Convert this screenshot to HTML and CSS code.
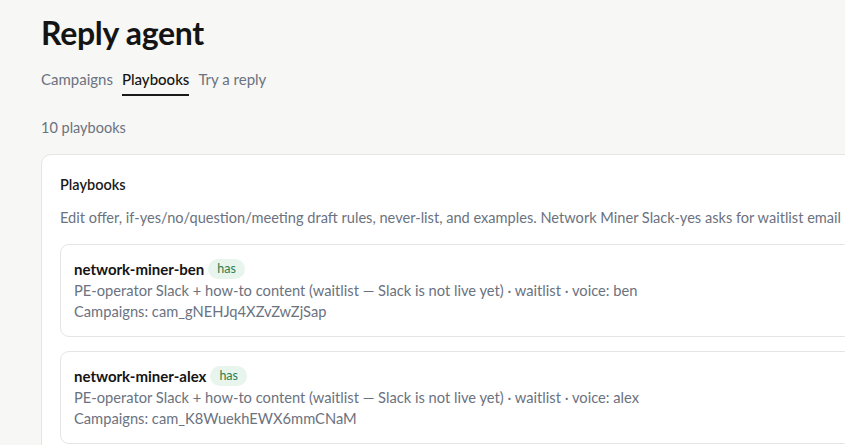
FILE: index.html
```html
<!DOCTYPE html>
<html lang="en">
<head>
<meta charset="utf-8">
<title>Reply agent</title>
<link rel="stylesheet" href="styles.css">
</head>
<body>
<main class="page">
  <h1 class="title">Reply agent</h1>
  <nav class="tabs">
    <a class="tab">Campaigns</a>
    <a class="tab active">Playbooks</a>
    <a class="tab">Try a reply</a>
  </nav>
  <p class="count">10 playbooks</p>
  <section class="card">
    <h2 class="card-title">Playbooks</h2>
    <p class="card-desc">Edit offer, if-yes/no/question/meeting draft rules, never-list, and examples. Network Miner Slack-yes asks for waitlist email — no call booking.</p>
    <div class="list">
      <article class="item">
        <div class="item-head"><span class="item-name">network-miner-ben</span><span class="badge">has</span></div>
        <div class="item-line">PE-operator Slack + how-to content (waitlist — Slack is not live yet) · waitlist · voice: ben</div>
        <div class="item-line">Campaigns: cam_gNEHJq4XZvZwZjSap</div>
      </article>
      <article class="item">
        <div class="item-head"><span class="item-name">network-miner-alex</span><span class="badge">has</span></div>
        <div class="item-line">PE-operator Slack + how-to content (waitlist — Slack is not live yet) · waitlist · voice: alex</div>
        <div class="item-line">Campaigns: cam_K8WuekhEWX6mmCNaM</div>
      </article>
    </div>
  </section>
</main>
</body>
</html>
```

FILE: styles.css
```css
* { box-sizing: border-box; }
html, body { margin: 0; padding: 0; }
body {
  background: #f7f7f5;
  font-family: "Segoe UI", Lato, "Liberation Sans", sans-serif;
  color: #1a1a1a;
  overflow: hidden;
}
.page {
  width: 1100px;
  padding: 14px 0 0 41px;
}
.title {
  margin: 0;
  font-size: 32px;
  font-weight: 700;
  line-height: 38px;
  letter-spacing: -0.3px;
  color: #141414;
}
.tabs {
  display: flex;
  gap: 9px;
  margin-top: 17px;
}
.tab {
  font-size: 15px;
  line-height: 20px;
  color: #6b7280;
  padding-bottom: 5px;
  border-bottom: 2px solid transparent;
}
.tab.active {
  color: #141414;
  font-weight: 500;
  border-bottom-color: #1a1a1a;
}
.count {
  margin: 22px 0 0;
  font-size: 14.5px;
  line-height: 20px;
  color: #6b7280;
}
.card {
  margin-top: 16px;
  background: #fff;
  border: 1px solid #e5e5e3;
  border-radius: 10px;
  padding: 19px 18px 18px;
}
.card-title {
  margin: 0;
  font-size: 14.5px;
  font-weight: 600;
  line-height: 22px;
  color: #1a1a1a;
}
.card-desc {
  margin: 12px 0 0;
  font-size: 14.6px;
  line-height: 20px;
  color: #6b7280;
  white-space: nowrap;
}
.list {
  display: flex;
  flex-direction: column;
  gap: 14px;
  margin-top: 16px;
}
.item {
  border: 1px solid #e5e5e3;
  border-radius: 9px;
  padding: 12px 14px 14px 13px;
}
.item-head {
  display: flex;
  align-items: center;
  gap: 4px;
  height: 23px;
}
.item-name {
  font-size: 15px;
  font-weight: 700;
  color: #141414;
}
.badge {
  font-size: 12.5px;
  line-height: 20px;
  padding: 0 9px;
  border-radius: 10px;
  background: #e8f5ec;
  color: #2e7d4f;
}
.item-line {
  font-size: 14.7px;
  line-height: 21px;
  color: #6b7280;
}
```
